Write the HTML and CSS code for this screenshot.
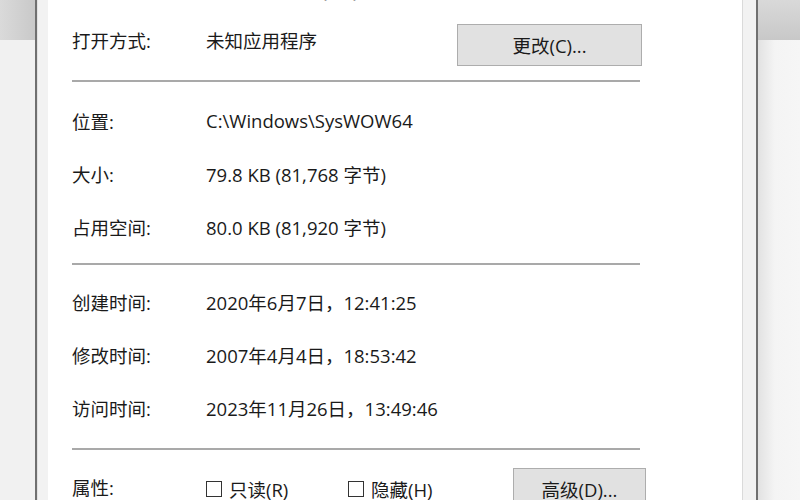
FILE: index.html
```html
<!DOCTYPE html>
<html lang="zh-CN">
<head>
<meta charset="utf-8">
<title>属性</title>
<link rel="stylesheet" href="styles.css">
</head>
<body>
<div class="screen">
  <div class="side side-left"><div class="side-top"></div><div class="side-bottom"></div></div>
  <div class="edge"></div>
  <div class="frame frame-left"></div>
  <div class="dialog">
    <div class="row row-cut">
      <div class="label">文件类型:</div>
      <div class="value">应用程序扩展 (.dll)</div>
    </div>
    <div class="row row-open">
      <div class="label label-raised">打开方式:</div>
      <div class="value value-raised">未知应用程序</div>
      <button class="btn btn-change">更改(C)...</button>
    </div>
    <div class="sep sep-1"></div>
    <div class="section section-1">
      <div class="row info"><div class="label">位置:</div><div class="value">C:\Windows\SysWOW64</div></div>
      <div class="row info"><div class="label">大小:</div><div class="value">79.8 KB (81,768 字节)</div></div>
      <div class="row info"><div class="label">占用空间:</div><div class="value">80.0 KB (81,920 字节)</div></div>
    </div>
    <div class="sep sep-2"></div>
    <div class="section section-2">
      <div class="row info"><div class="label">创建时间:</div><div class="value">2020年6月7日，12:41:25</div></div>
      <div class="row info"><div class="label">修改时间:</div><div class="value">2007年4月4日，18:53:42</div></div>
      <div class="row info"><div class="label">访问时间:</div><div class="value">2023年11月26日，13:49:46</div></div>
    </div>
    <div class="sep sep-3"></div>
    <div class="row row-attr">
      <div class="label label-attr">属性:</div>
      <label class="check check-ro"><span class="box"></span>只读(R)</label>
      <label class="check check-hidden"><span class="box"></span>隐藏(H)</label>
      <button class="btn btn-adv">高级(D)...</button>
    </div>
  </div>
  <div class="frame frame-right"></div>
  <div class="edge"></div>
  <div class="side side-right"><div class="side-top"></div><div class="side-bottom"></div></div>
</div>
</body>
</html>
```
FILE: styles.css
```css
* { box-sizing: border-box; }
html, body { margin: 0; padding: 0; }
body {
  width: 800px;
  height: 500px;
  overflow: hidden;
  background: #ffffff;
  font-family: "Open Sans", "Noto Sans CJK SC", sans-serif;
  font-size: 18.5px;
  color: #1a1a1a;
}
.screen {
  display: flex;
  width: 800px;
  height: 500px;
  overflow: hidden;
}
.side { display: flex; flex-direction: column; flex: none; }
.side-left { width: 35px; }
.side-right { width: 42px; }
.side-top { height: 40px; background: #d3d3d3; }
.side-left .side-top { background: linear-gradient(to right, #dadada, #c9c9c9); }
.side-right .side-top { background: linear-gradient(to bottom, #d9d9d9, #c8c8c8); }
.side-bottom { flex: 1; background: #f1f1f1; }
.side-right .side-bottom { background: linear-gradient(to right, #e2e2e2, #f4f4f4 40%, #f6f6f6); }
.edge { width: 2px; background: #707070; flex: none; }
.frame { background: #f2f2f2; flex: none; }
.frame-left { width: 11px; border-left: 1px solid #e2e2e2; }
.frame-right { width: 14px; border-left: 1px solid #dadada; }
.dialog {
  width: 694px;
  flex: none;
  background: #ffffff;
  padding-left: 24px;
  display: flex;
  flex-direction: column;
}
.row { display: flex; width: 600px; }
.label { width: 134px; flex: none; white-space: nowrap; }
.value { white-space: nowrap; }
.row-cut {
  margin-top: -21px;
  height: 24px;
  line-height: 24px;
  color: #9a9a9a;
}
.row-open {
  margin-top: 21px;
  height: 42px;
  align-items: flex-start;
}
.label-raised, .value-raised { line-height: 24px; margin-top: 5px; }
.value-raised { width: 251px; flex: none; }
.btn {
  font-family: inherit;
  font-size: 18.5px;
  color: #1a1a1a;
  background: #e1e1e1;
  border: 1px solid #adadad;
  border-radius: 0;
  padding: 0;
  height: 42px;
  flex: none;
}
.btn-change { width: 185px; }
.sep { height: 2px; width: 568px; background: #a9a9a9; flex: none; }
.sep-1 { margin-top: 14px; }
.section { display: flex; flex-direction: column; }
.section-1 { margin-top: 12px; }
.section-2 { margin-top: 10px; }
.sep-2 { margin-top: 10px; }
.sep-3 { margin-top: 14px; }
.info { height: 53px; align-items: center; }
.row-attr {
  margin-top: 18px;
  height: 42px;
  align-items: center;
}
.label-attr { margin-top: -5px; }
.check {
  display: flex;
  align-items: center;
  white-space: nowrap;
  flex: none;
}
.check-ro { width: 142px; }
.check-hidden { width: 165px; }
.box {
  width: 16px;
  height: 16px;
  border: 1px solid #333333;
  background: #ffffff;
  margin-right: 7px;
  flex: none;
}
.btn-adv { width: 133px; }
```
